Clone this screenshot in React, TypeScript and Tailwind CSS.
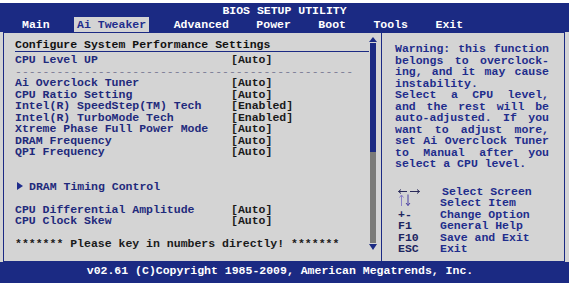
import React from 'react';

const tabs = ['Main', 'Ai Tweaker', 'Advanced', 'Power', 'Boot', 'Tools', 'Exit'];

const settings = [
  { label: 'Ai Overclock Tuner', value: '[Auto]' },
  { label: 'CPU Ratio Setting', value: '[Auto]' },
  { label: 'Intel(R) SpeedStep(TM) Tech', value: '[Enabled]' },
  { label: 'Intel(R) TurboMode Tech', value: '[Enabled]' },
  { label: 'Xtreme Phase Full Power Mode', value: '[Auto]' },
  { label: 'DRAM Frequency', value: '[Auto]' },
  { label: 'QPI Frequency', value: '[Auto]' },
];

const helpLines = [
  { text: 'Warning: this function', last: false },
  { text: 'belongs to overclock-', last: false },
  { text: 'ing, and it may cause', last: false },
  { text: 'instability.', last: true },
  { text: 'Select a CPU level,', last: false },
  { text: 'and the rest will be', last: false },
  { text: 'auto-adjusted. If you', last: false },
  { text: 'want to adjust more,', last: false },
  { text: 'set Ai Overclock Tuner', last: false },
  { text: 'to Manual after you', last: false },
  { text: 'select a CPU level.', last: true },
];

function SettingRow({ label, value }: { label: string; value: string }) {
  return (
    <div className="flex h-[11.5px]">
      <span className="w-[216px] text-[#1f2a7c]">{label}</span>
      <span className="text-[#1a1a1a]">{value}</span>
    </div>
  );
}

function LeftRight() {
  return (
    <svg width="22" height="7" viewBox="0 0 22 7" className="mt-[2px]">
      <path d="M0.5 3.5 H9 M0.5 3.5 L3 1.5 M0.5 3.5 L3 5.5" stroke="#2a2a5a" strokeWidth="1" fill="none" />
      <path d="M12 3.5 H21.5 M21.5 3.5 L19 1.5 M21.5 3.5 L19 5.5" stroke="#2a2a5a" strokeWidth="1" fill="none" />
    </svg>
  );
}

function UpDown() {
  return (
    <svg width="14" height="13" viewBox="0 0 14 13" className="-mt-[3px]">
      <path d="M3.5 12 V1 M3.5 1 L1.5 3.5 M3.5 1 L5.5 3.5" stroke="#8a80c8" strokeWidth="1" fill="none" />
      <path d="M10 0.5 V11.5 M10 11.5 L8 9 M10 11.5 L12 9" stroke="#4a40a0" strokeWidth="1" fill="none" />
    </svg>
  );
}

export default function App() {
  return (
    <div className="w-[569px] h-[283px] overflow-hidden bg-white pt-[3px] flex flex-col font-['Liberation_Mono','DejaVu_Sans_Mono',monospace] font-bold text-[11.5px] leading-[11.5px]">
      {/* title + tabs */}
      <header className="h-[29px] bg-[#1b2a83] flex flex-col">
        <div className="h-[14px] pt-[2px] text-center text-white">BIOS SETUP UTILITY</div>
        <nav className="h-[15px] flex pl-[19px] gap-[21.5px]">
          {tabs.map((t) => (
            <span
              key={t}
              className={`px-[3px] pt-[2px] ${
                t === 'Ai Tweaker' ? 'bg-[#d4d4d4] text-[#1f2d8c]' : 'text-white'
              }`}
            >
              {t}
            </span>
          ))}
        </nav>
      </header>

      {/* main panel */}
      <main className="h-[230px] bg-[#d4d4d4] pl-[3px] pr-[4px]">
        <div className="h-full border border-[#1b2a83] flex">
          <section className="w-[365px] pl-[11px] pt-[6px]">
            <div className="h-[13px] border-b border-[#1b2a83] text-[#111]">Configure System Performance Settings</div>
            <div className="mt-[2px]">
              <SettingRow label="CPU Level UP" value="[Auto]" />
              <div className="h-[11.5px] text-[#7c7c96] font-normal">
                {'-'.repeat(49)}
              </div>
              {settings.map((s) => (
                <SettingRow key={s.label} {...s} />
              ))}
              <div className="h-[23px]" />
              <div className="h-[11.5px] flex items-center text-[#1f2a7c]">
                <svg width="6" height="8" viewBox="0 0 6 8" className="ml-[2px] mr-[6px]">
                  <path d="M0 0 L6 4 L0 8 Z" fill="#1f2d8c" />
                </svg>
                DRAM Timing Control
              </div>
              <div className="h-[11.5px]" />
              <SettingRow label="CPU Differential Amplitude" value="[Auto]" />
              <SettingRow label="CPU Clock Skew" value="[Auto]" />
              <div className="h-[11px]" />
              <div className="h-[11.5px] text-[#1a1a1a]">******* Please key in numbers directly! *******</div>
            </div>
          </section>

          {/* scrollbar */}
          <div className="w-[8px] pt-[4px] flex flex-col items-center">
            <svg width="8" height="5" viewBox="0 0 8 5">
              <path d="M4 0 L8 5 L0 5 Z" fill="#1b2a83" />
            </svg>
            <div className="mt-[1px] w-[6px] h-[109px] bg-[#1b2a83]" />
            <div className="w-[6px] h-[91px] bg-[#7b7b78]" />
            <svg width="8" height="6" viewBox="0 0 8 6" className="mt-[1px]">
              <path d="M0 0 L8 0 L4 6 Z" fill="#1b2a83" />
            </svg>
          </div>

          {/* help */}
          <aside className="ml-[4px] flex-1 border-l border-[#1b2a83] pl-[13px] pt-[10px] text-[#1f2d8c]">
            <div className="w-[154px]">
              {helpLines.map((l) => (
                <div
                  key={l.text}
                  className={`h-[11.5px] ${l.last ? 'whitespace-nowrap' : 'text-justify [text-align-last:justify]'}`}
                >
                  {l.text}
                </div>
              ))}
            </div>
            <div className="mt-[16px] pl-[3px]">
              {[
                { key: <LeftRight />, desc: 'Select Screen', pad: 'pl-[2px]' },
                { key: <UpDown />, desc: 'Select Item', pad: '' },
                { key: '+-', desc: 'Change Option', pad: '' },
                { key: 'F1', desc: 'General Help', pad: '' },
                { key: 'F10', desc: 'Save and Exit', pad: '' },
                { key: 'ESC', desc: 'Exit', pad: '' },
              ].map((r, i) => (
                <div key={i} className="h-[11.5px] flex">
                  <span className="w-[42px] text-[#1c2560]">{r.key}</span>
                  <span className={r.pad}>{r.desc}</span>
                </div>
              ))}
            </div>
          </aside>
        </div>
      </main>

      <footer className="flex-1 bg-[#1b2a83] text-white text-center pt-[3px] pr-[9px]">
        v02.61 (C)Copyright 1985-2009, American Megatrends, Inc.
      </footer>
    </div>
  );
}
